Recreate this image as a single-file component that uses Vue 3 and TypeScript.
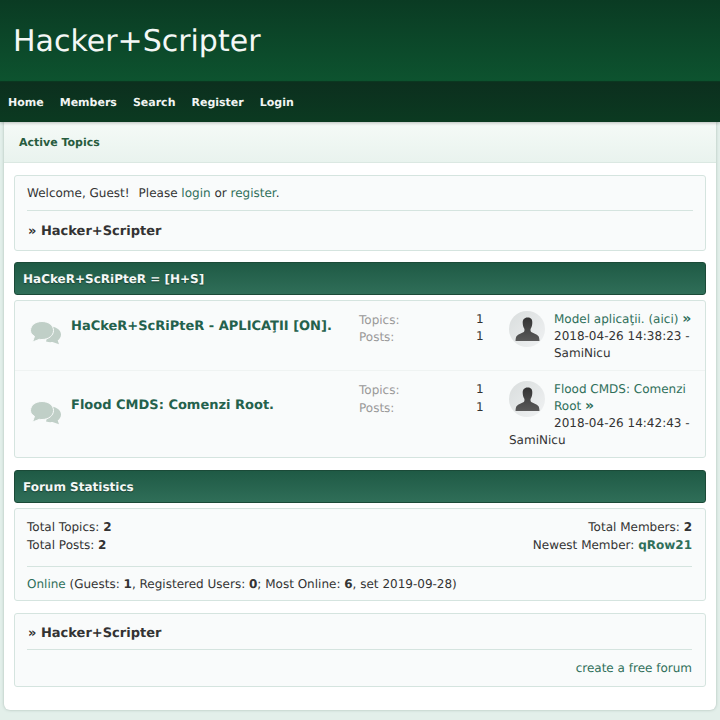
<script setup lang="ts">
const navItems = ['Home', 'Members', 'Search', 'Register', 'Login'];

const boards = [
  {
    title: 'HaCkeR+ScRiPteR - APLICAŢII [ON].',
    topics: 1,
    posts: 1,
    last: 'Model aplicaţii. (aici)',
    date: '2018-04-26 14:38:23',
  },
  {
    title: 'Flood CMDS: Comenzi Root.',
    topics: 1,
    posts: 1,
    last: 'Flood CMDS: Comenzi Root',
    date: '2018-04-26 14:42:43',
  },
];
</script>

<template>
  <div class="page">
    <header class="banner">
      <h1>Hacker+Scripter</h1>
    </header>
    <nav class="nav">
      <a v-for="item in navItems" :key="item">{{ item }}</a>
    </nav>

    <main class="wrapper">
      <div class="subnav"><a>Active Topics</a></div>

      <div class="content">
        <section class="box welcome">
          <p class="welcome-line">
            Welcome, Guest!<span class="gap"></span>Please <a>login</a> or <a>register</a>.
          </p>
          <h2 class="crumb"><span class="raquo">»</span> Hacker+Scripter</h2>
        </section>

        <h3 class="cat cat-first">HaCkeR+ScRiPteR = [H+S]</h3>
        <section class="box boards">
          <article v-for="(board, i) in boards" :key="board.title" class="board" :class="{ second: i === 1 }">
            <svg class="bubbles" width="31" height="24" viewBox="0 0 31 24" aria-hidden="true">
              <path
                fill="#c0cfc7"
                d="M20 5.500c5.500 0 11 3 11 8 0 2.800-1.700 4.800-3.300 6l1.300 3.800-6.500-2.300c-1.500.2-3.500.4-6.500-.5z"
              />
              <path
                fill="#c0cfc7"
                stroke="#f9fbfb"
                stroke-width="1"
                d="M12 .5c6.500 0 11.500 3.800 11.500 9s-5 9-11.500 9c-.9 0-1.700 0-2.500-.2L2.500 21l2-5.700C2 13.800.5 12 .5 9.500.5 4.300 5.500.5 12 .5z"
              />
            </svg>
            <a class="board-title">{{ board.title }}</a>
            <dl class="counts">
              <dt>Topics:</dt>
              <dd>{{ board.topics }}</dd>
              <dt>Posts:</dt>
              <dd>{{ board.posts }}</dd>
            </dl>
            <div class="last">
              <svg class="avatar" width="36" height="36" viewBox="0 0 36 36" aria-hidden="true">
                <defs>
                  <linearGradient :id="`av${i}`" x1="0" y1="0" x2="1" y2="1">
                    <stop offset="0" stop-color="#d9dddd" />
                    <stop offset="1" stop-color="#f0f2f3" />
                  </linearGradient>
                  <linearGradient :id="`man${i}`" x1="0" y1="0" x2="0" y2="1">
                    <stop offset="0" stop-color="#333" />
                    <stop offset="1" stop-color="#5a5a5a" />
                  </linearGradient>
                </defs>
                <circle cx="18" cy="18" r="18" :fill="`url(#av${i})`" />
                <path
                  :fill="`url(#man${i})`"
                  d="M18.500 6.500c-3.200 0-5 2.400-4.800 5.400.1 2.300.7 4.400 1.500 5.700.5.800.4 2.700-.4 3.300-1.600 1.100-5.700 2-7.300 4.300-.6.900-.9 2.700-1 4.800h24c-.1-2.100-.4-3.900-1-4.800-1.600-2.300-5.700-3.200-7.300-4.300-.8-.6-.9-2.500-.4-3.300.8-1.300 1.400-3.400 1.500-5.700.2-3-1.100-5.400-4.300-5.400z"
                />
              </svg>
              <a>{{ board.last }} <span class="raquo-link">»</span></a><br />
              {{ board.date }} - SamiNicu
            </div>
          </article>
        </section>

        <h3 class="cat">Forum Statistics</h3>
        <section class="box stats">
          <div class="stats-top">
            <div>
              Total Topics: <b>2</b><br />
              Total Posts: <b>2</b>
            </div>
            <div class="stats-right">
              Total Members: <b>2</b><br />
              Newest Member: <a class="member">qRow21</a>
            </div>
          </div>
          <p class="online">
            <a>Online</a> (Guests: <b>1</b>, Registered Users: <b>0</b>; Most Online: <b>6</b>, set 2019-09-28)
          </p>
        </section>

        <section class="box footer-box">
          <h2 class="crumb footer-crumb"><span class="raquo">»</span> Hacker+Scripter</h2>
          <p class="credit"><a>create a free forum</a></p>
        </section>
      </div>
    </main>
  </div>
</template>

<style>
html,
body {
  margin: 0;
  background: #e3efea;
}
</style>

<style scoped>
.page {
  height: 720px;
  overflow: hidden;
  font-family: 'DejaVu Sans', sans-serif;
  font-size: 12px;
  line-height: 17.300px;
  color: #333;
  background: #e3efea;
  text-rendering: geometricPrecision;
}

a {
  color: #2f6f5a;
}

.banner {
  height: 81px;
  border-bottom: 1px solid #0b3a22;
  background: linear-gradient(#0a3b23, #0d532f);
  display: flex;
  align-items: center;
  padding-left: 13px;
}

.banner h1 {
  margin: 0;
  padding-top: 2px;
  font-size: 30px;
  font-weight: 400;
  line-height: 40px;
  color: #f4f8f6;
}

.nav {
  height: 40px;
  box-sizing: border-box;
  padding: 2px 0 0 8px;
  display: flex;
  align-items: center;
  gap: 16px;
  background: linear-gradient(#0c2f1e, #0b3a21);
  box-shadow: 0 1px 3px rgb(0 0 0 / 25%);
  position: relative;
}

.nav a {
  color: #f1f4f2;
  font-size: 11px;
  font-weight: 700;
}

.wrapper {
  margin: 0 4px;
  height: 588px;
  background: #fff;
  border-radius: 0 0 6px 6px;
  box-shadow: 0 0 3px rgb(60 90 80 / 35%);
}

.subnav {
  height: 41px;
  box-sizing: border-box;
  padding: 1px 0 0 15px;
  border-bottom: 1px solid #dbe8e2;
  background: linear-gradient(#f5faf7, #e9f3ee);
  display: flex;
  align-items: center;
}

.subnav a {
  font-size: 11px;
  font-weight: 700;
  color: #275c3e;
}

.content {
  padding: 12px 10px 0;
}

.box {
  background: #f9fbfb;
  border: 1px solid #d5e4df;
  border-radius: 3px;
}

.welcome {
  height: 76px;
  box-sizing: border-box;
  padding: 0 12px;
}

.welcome-line {
  margin: 0;
  height: 34px;
  line-height: 34px;
  border-bottom: 1px solid #d5e4df;
}

.gap {
  display: inline-block;
  width: 9px;
}

.crumb {
  margin: 0;
  font-size: 13px;
  font-weight: 700;
  color: #333;
  line-height: 41px;
  padding-left: 1px;
}

.raquo {
  font-weight: 700;
}

.cat {
  margin: 12px 0 0;
  height: 33px;
  box-sizing: border-box;
  padding-left: 8px;
  font-size: 12px;
  font-weight: 700;
  line-height: 33px;
  color: #f4f8f6;
  border: 1px solid #1b4a38;
  border-radius: 3px;
  background: linear-gradient(#1f5a45, #2f6e58);
  text-shadow: 0 1px 1px rgb(0 0 0 / 40%);
}

.cat-first {
  margin-top: 11px;
}

.boards {
  margin-top: 5px;
}

.board {
  position: relative;
  height: 70px;
  border-bottom: 1px solid #eff3f2;
  box-sizing: border-box;
  display: grid;
  grid-template-columns: 344px 150px 1fr;
}

.board.second {
  height: 86px;
  border-bottom: 0;
}

.bubbles {
  position: absolute;
  left: 15px;
  top: 20px;
}

.second .bubbles {
  top: 30px;
}

.board-title {
  padding: 17px 0 0 56px;
  font-size: 13px;
  font-weight: 700;
  color: #24614c;
}

.second .board-title {
  padding-top: 26px;
}

.counts {
  margin: 0;
  padding-top: 11px;
  display: grid;
  grid-template-columns: 1fr 33px;
  grid-auto-rows: 17.300px;
}

.second .counts {
  grid-auto-rows: 18px;
}

.counts dt {
  color: #999;
}

.counts dd {
  margin: -1px 0 0;
}

.last {
  padding: 10px 8px 0 0;
  line-height: 17px;
}

.avatar {
  float: left;
  margin: 0 9px 0 0;
}

.raquo-link {
  font-size: 14px;
  font-weight: 700;
  line-height: 1;
}

.stats {
  margin-top: 5px;
  height: 93px;
  box-sizing: border-box;
  padding: 0 13px 0 12px;
}

.stats-top {
  display: flex;
  justify-content: space-between;
  height: 58px;
  padding-top: 9px;
  line-height: 18px;
  box-sizing: border-box;
  border-bottom: 1px solid #d5e4df;
}

.stats-right {
  text-align: right;
}

.member {
  font-weight: 700;
}

.online {
  margin: 0;
  line-height: 34px;
}

.footer-box {
  margin-top: 12px;
  height: 74px;
  box-sizing: border-box;
  padding: 0 13px 0 12px;
}

.footer-crumb {
  height: 35px;
  line-height: 39px;
  border-bottom: 1px solid #d5e4df;
}

.credit {
  margin: 0;
  text-align: right;
  line-height: 36px;
}
</style>
